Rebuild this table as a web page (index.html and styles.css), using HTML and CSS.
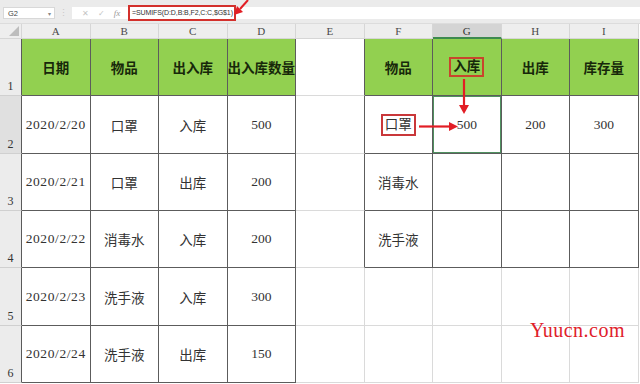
FILE: index.html
```html
<!DOCTYPE html>
<html lang="zh">
<head>
<meta charset="utf-8">
<link rel="stylesheet" href="styles.css">
</head>
<body>
<div class="app">
  <div class="topbar">
    <div class="namebox"><span class="nm">G2</span><span class="dd">▾</span></div>
    <div class="sep">⋮</div>
    <div class="field">
      <span class="ico">✕</span><span class="ico">✓</span><span class="ico fx">fx</span>
      <span class="fbox">=SUMIFS(D:D,B:B,F2,C:C,$G$1)</span>
    </div>
  </div>
  <div class="sheet">
    <div class="corner"></div>
    <div class="ch">A</div><div class="ch">B</div><div class="ch">C</div><div class="ch">D</div><div class="ch">E</div><div class="ch">F</div><div class="ch sel">G</div><div class="ch">H</div><div class="ch">I</div>

    <div class="rh dk">1</div>
    <div class="c t g">日期</div><div class="c t g">物品</div><div class="c t g">出入库</div><div class="c t g">出入库数量</div>
    <div class="c edk"></div>
    <div class="c t g">物品</div><div class="c t g"><span class="rbox">入库</span></div><div class="c t g">出库</div><div class="c t g">库存量</div>

    <div class="rh dk rsel">2</div>
    <div class="c t date">2020/2/20</div><div class="c t">口罩</div><div class="c t">入库</div><div class="c t">500</div>
    <div class="c edk"></div>
    <div class="c t"><span class="rbox thin">口罩</span></div><div class="c t active">500</div><div class="c t">200</div><div class="c t">300</div>

    <div class="rh dk">3</div>
    <div class="c t date">2020/2/21</div><div class="c t">口罩</div><div class="c t">出库</div><div class="c t">200</div>
    <div class="c edk"></div>
    <div class="c t">消毒水</div><div class="c t"></div><div class="c t"></div><div class="c t"></div>

    <div class="rh dk">4</div>
    <div class="c t date">2020/2/22</div><div class="c t">消毒水</div><div class="c t">入库</div><div class="c t">200</div>
    <div class="c edk"></div>
    <div class="c t">洗手液</div><div class="c t"></div><div class="c t"></div><div class="c t"></div>

    <div class="rh dk">5</div>
    <div class="c t date">2020/2/23</div><div class="c t">洗手液</div><div class="c t">入库</div><div class="c t">300</div>
    <div class="c"></div>
    <div class="c"></div><div class="c"></div><div class="c"></div><div class="c"></div>

    <div class="rh dk">6</div>
    <div class="c t date">2020/2/24</div><div class="c t">洗手液</div><div class="c t">出库</div><div class="c t">150</div>
    <div class="c"></div>
    <div class="c"></div><div class="c"></div><div class="c"></div><div class="c"></div>
  </div>
  <svg class="overlay" width="640" height="384" viewBox="0 0 640 384">
    <g fill="#e21e25" stroke="#e21e25">
      <line x1="248" y1="0" x2="240" y2="9" stroke-width="2"/>
      <polygon points="234,15 237,6 243,12" stroke="none"/>
      <line x1="464" y1="79" x2="464" y2="106" stroke-width="2.2"/>
      <polygon points="459,105 469,105 464,114" stroke="none"/>
      <line x1="419" y1="126.5" x2="450" y2="126.5" stroke-width="2.2"/>
      <polygon points="449,122 449,131 458,126.5" stroke="none"/>
    </g>
  </svg>
  <div class="watermark">Yuucn.com</div>
</div>
</body>
</html>
```
FILE: styles.css
```css
* { box-sizing: border-box; }
html, body { margin: 0; padding: 0; background: #ffffff; }
.app {
  position: relative;
  width: 640px;
  height: 384px;
  overflow: hidden;
  font-family: "Liberation Serif", "Noto Sans CJK SC", serif;
}
.topbar {
  height: 24px;
  background: #ebebeb;
  display: flex;
  align-items: flex-start;
  padding-top: 7px;
  border-bottom: 1px solid #dcdcdc;
}
.namebox {
  margin-left: 3px;
  width: 52px;
  height: 12px;
  background: #fff;
  border: 1px solid #d8d8d8;
  display: flex;
  align-items: center;
  justify-content: space-between;
  padding: 0 3px 0 4px;
  font-family: "Liberation Sans", sans-serif;
  font-size: 7.5px;
  color: #444;
}
.dd { font-size: 6px; color: #888; }
.sep {
  width: 17px;
  text-align: center;
  font-family: "Liberation Sans", sans-serif;
  font-size: 9px;
  line-height: 12px;
  color: #c8c8c8;
}
.field {
  flex: 1;
  height: 12px;
  background: #fff;
  display: flex;
  align-items: center;
  padding-left: 5px;
  font-family: "Liberation Sans", sans-serif;
}
.ico {
  width: 16px;
  text-align: center;
  font-size: 8px;
  color: #c4c4c4;
}
.fx { font-style: italic; font-family: "Liberation Serif", serif; color: #9a9a9a; font-size: 9px; }
.fbox {
  margin-left: 3px;
  margin-top: -1px;
  height: 16px;
  display: flex;
  align-items: center;
  border: 2px solid #d3302c;
  padding: 0 1px 0 2px;
  font-size: 7px;
  letter-spacing: -0.1px;
  color: #333;
  white-space: nowrap;
}
.sheet {
  display: grid;
  grid-template-columns: 22px repeat(9, 68.5px);
  grid-template-rows: 15px repeat(6, 57.35px);
  background: #fff;
}
.corner {
  background: #eeeeee;
  border-right: 1px solid #d6d6d6;
  border-bottom: 1px solid #d6d6d6;
  position: relative;
}
.corner::after {
  content: "";
  position: absolute;
  right: 2px;
  bottom: 2px;
  width: 0;
  height: 0;
  border-left: 10px solid transparent;
  border-bottom: 10px solid #bdbdbd;
}
.ch {
  background: #eeeeee;
  border-right: 1px solid #d6d6d6;
  border-bottom: 1px solid #d6d6d6;
  font-size: 11px;
  line-height: 14px;
  text-align: center;
  color: #4a4a4a;
}
.ch.sel {
  background: #d4d4d4;
  border-bottom: 2px solid #3d8a4e;
  color: #333;
}
.rh {
  background: #ececec;
  border-right: 1px solid #d6d6d6;
  border-bottom: 1px solid #d0d0d0;
  font-size: 12px;
  color: #333;
  display: flex;
  align-items: flex-end;
  justify-content: center;
  padding-bottom: 1px;
}
.rh.dk { border-right-color: #5a5a5a; }
.rh.rsel { background: #e0e0e0; }
.c {
  border-right: 1px solid #dadada;
  border-bottom: 1px solid #dadada;
  display: flex;
  align-items: center;
  justify-content: center;
  font-size: 13.5px;
  color: #333;
  white-space: nowrap;
}
.c.t { border-right-color: #5c5c5c; border-bottom-color: #5c5c5c; }
.c.edk { border-right-color: #5c5c5c; }
.c.g {
  background: #92d050;
  font-weight: bold;
  color: #17280a;
}
.date { letter-spacing: 0.6px; }
.active { box-shadow: inset 0 0 0 1px #4f9160; }
.rbox {
  border: 2px solid #c8452c;
  padding: 0 2px;
  line-height: 16px;
}
.rbox.thin { border-color: #c9373a; padding: 1px 2px; }
.overlay {
  position: absolute;
  left: 0;
  top: 0;
  pointer-events: none;
}
.watermark {
  position: absolute;
  left: 530px;
  top: 320px;
  font-family: "Liberation Serif", serif;
  font-size: 20px;
  line-height: 1;
  letter-spacing: 0.5px;
  color: #e0202a;
}
```
